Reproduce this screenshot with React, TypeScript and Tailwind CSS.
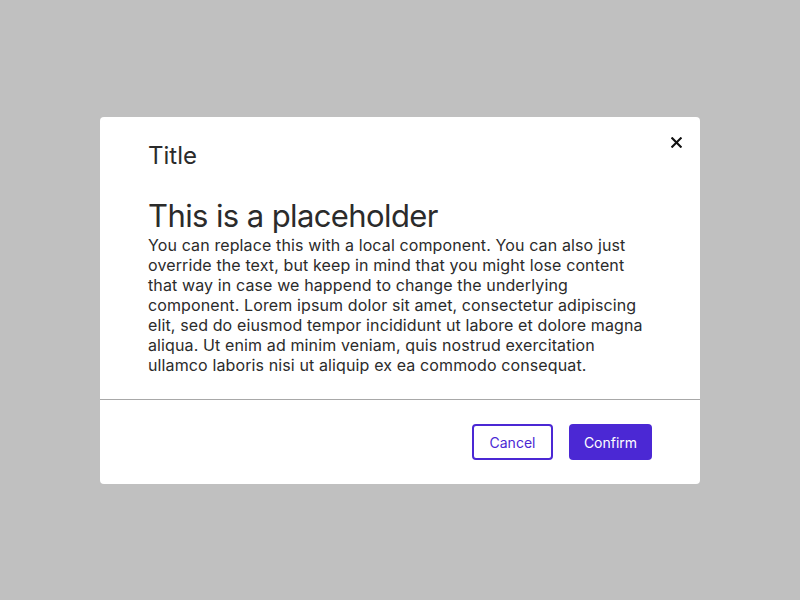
import React from "react";

export default function App() {
  return (
    <div
      className="w-[800px] h-[600px] bg-[#c0c0c0] flex items-start justify-center pt-[117px]"
      style={{ fontFamily: "Inter, 'Noto Sans', sans-serif" }}
    >
      <div className="relative w-[600px] bg-white rounded-[4px] text-[#2b2b2b]">
        <button className="absolute left-[570px] top-[19px] w-[12px] h-[12px] flex items-center justify-center">
          <svg width="11" height="11" viewBox="0 0 11 11">
            <path d="M1.3 1.3L9.7 9.7M9.7 1.3L1.3 9.7" stroke="#111" strokeWidth="2.1" strokeLinecap="square" />
          </svg>
        </button>
        <div className="pl-12 pr-[52px] pt-6 pb-6">
          <div className="text-[24px] leading-[29px]">Title</div>
          <div className="mt-[26px] text-[31px] leading-[39px] tracking-[-0.6px]">This is a placeholder</div>
          <p className="text-[16px] leading-[20px] tracking-[0.12px]">
            You can replace this with a local component. You can also just override the text, but keep in mind that you might lose content that way in case we happend to change the underlying component. Lorem ipsum dolor sit amet, consectetur adipiscing elit, sed do eiusmod tempor incididunt ut labore et dolore magna aliqua. Ut enim ad minim veniam, quis nostrud exercitation ullamco laboris nisi ut aliquip ex ea commodo consequat.
          </p>
        </div>
        <div className="border-t border-[#a8a8a8] px-12 py-6 flex justify-end gap-4">
          <button className="h-9 w-[81px] border-2 border-[#4b28d4] text-[#4b28d4] rounded-[4px] text-[14px]">
            Cancel
          </button>
          <button className="h-9 w-[83px] bg-[#4b28d4] text-white rounded-[4px] text-[14px]">
            Confirm
          </button>
        </div>
      </div>
    </div>
  );
}
